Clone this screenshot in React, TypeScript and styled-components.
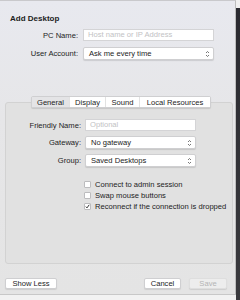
import React from "react";
import styled, { createGlobalStyle } from "styled-components";

const GlobalStyle = createGlobalStyle`
  html, body {
    margin: 0;
    padding: 0;
    background: #f4f4f4;
    width: 240px;
    height: 300px;
    overflow: hidden;
  }
  * { box-sizing: border-box; }
`;

const Screen = styled.div`
  display: flex;
  width: 240px;
  height: 300px;
  background: #f2f2f2;
`;

const Window = styled.div`
  width: 236px;
  height: 295px;
  display: flex;
  flex-direction: column;
  background: linear-gradient(#e8e9ef, #e6e6e8 40%, #e4e4e4);
  border-top: 1px solid #c9c9cc;
  border-right: 1px solid #bdbdbd;
  border-bottom: 1px solid #c8c8c8;
  font-family: "Liberation Sans", Arial, sans-serif;
  font-size: 7.6px;
  color: #1c1c1c;
`;

const SideShade = styled.div`
  flex: 1;
  background: linear-gradient(#f0f0f0 0, #f0f0f0 8px, #2a2a30 8px, #3a3a3e 100%);
`;

const Title = styled.div`
  font-weight: bold;
  font-size: 8px;
  padding: 13px 0 0 10px;
  height: 28px;
`;

const FormGrid = styled.div<{ $label: number; $field: number; $gap: number; $row: number }>`
  display: grid;
  grid-template-columns: ${(p) => p.$label}px ${(p) => p.$field}px;
  column-gap: ${(p) => p.$gap}px;
  row-gap: ${(p) => p.$row}px;
  align-items: center;
`;

const Label = styled.div`
  text-align: right;
  white-space: nowrap;
`;

const TextField = styled.div`
  height: 12px;
  background: #ffffff;
  border: 1px solid #d4d4d6;
  padding-left: 4px;
  color: #c2c2c4;
  line-height: 10px;
  white-space: nowrap;
`;

const Select = styled.div`
  height: 13px;
  background: #ffffff;
  border: 1px solid #cfcfd1;
  border-radius: 2px;
  box-shadow: 0 1px 1px rgba(0, 0, 0, 0.12);
  display: flex;
  align-items: center;
  justify-content: space-between;
  padding: 0 3px 0 5px;
  white-space: nowrap;
`;

const Chevrons = () => (
  <svg width="5" height="8" viewBox="0 0 5 8">
    <path d="M1 3 L2.5 1.5 L4 3 M1 5 L2.5 6.5 L4 5" stroke="#555" strokeWidth="0.8" fill="none" />
  </svg>
);

const TopForm = styled.div`
  padding-left: 6px;
`;

const TabArea = styled.div`
  position: relative;
  margin: 36px 2px 0 5px;
  flex: 0 0 168px;
  display: flex;
  flex-direction: column;
`;

const TabPanel = styled.div`
  flex: 1;
  margin-top: 6px;
  background: #e1e1e1;
  border: 1px solid #d2d2d2;
  border-radius: 3px;
  padding: 16px 0 0 5px;
`;

const TabBar = styled.div`
  position: absolute;
  top: 0;
  left: 26px;
  display: flex;
  height: 12px;
  background: #ffffff;
  border: 1px solid #cfcfd1;
  border-radius: 2px;
  box-shadow: 0 1px 1px rgba(0, 0, 0, 0.12);
`;

const Tab = styled.div<{ $active?: boolean; $w: number }>`
  width: ${(p) => p.$w}px;
  display: flex;
  align-items: center;
  justify-content: center;
  background: ${(p) => (p.$active ? "#e4e4e6" : "#ffffff")};
  border-right: 1px solid #e2e2e2;
  &:last-child { border-right: none; }
`;

const Checks = styled.div`
  display: flex;
  flex-direction: column;
  gap: 3px;
  margin: 13px 0 0 73px;
`;

const CheckRow = styled.div`
  display: flex;
  align-items: center;
  gap: 4px;
  white-space: nowrap;
  height: 8px;
`;

const Box = styled.div`
  width: 7px;
  height: 7px;
  background: #ffffff;
  border: 1px solid #bcbcbe;
  border-radius: 1px;
  display: flex;
  align-items: center;
  justify-content: center;
`;

const Footer = styled.div`
  display: flex;
  align-items: center;
  padding: 14px 8px 0 5px;
  gap: 8px;
`;

const Button = styled.div<{ $disabled?: boolean; $w: number }>`
  width: ${(p) => p.$w}px;
  height: 11px;
  background: ${(p) => (p.$disabled ? "#ededed" : "#ffffff")};
  border: 1px solid ${(p) => (p.$disabled ? "#dedede" : "#cfcfd1")};
  border-radius: 2px;
  box-shadow: 0 1px 1px rgba(0, 0, 0, 0.1);
  color: ${(p) => (p.$disabled ? "#b4b4b4" : "#1c1c1c")};
  display: flex;
  align-items: center;
  justify-content: center;
`;

const Spacer = styled.div`
  flex: 1;
`;

export default function App() {
  return (
    <Screen>
      <GlobalStyle />
      <Window>
        <Title>Add Desktop</Title>
        <TopForm>
          <FormGrid $label={72} $field={131} $gap={5} $row={6}>
            <Label>PC Name:</Label>
            <TextField>Host name or IP Address</TextField>
            <Label>User Account:</Label>
            <Select>
              <span>Ask me every time</span>
              <Chevrons />
            </Select>
          </FormGrid>
        </TopForm>
        <TabArea>
          <TabBar>
            <Tab $active $w={38}>General</Tab>
            <Tab $w={36}>Display</Tab>
            <Tab $w={34}>Sound</Tab>
            <Tab $w={70}>Local Resources</Tab>
          </TabBar>
          <TabPanel>
            <FormGrid $label={70} $field={111} $gap={4} $row={5}>
              <Label>Friendly Name:</Label>
              <TextField>Optional</TextField>
              <Label>Gateway:</Label>
              <Select>
                <span>No gateway</span>
                <Chevrons />
              </Select>
              <Label>Group:</Label>
              <Select>
                <span>Saved Desktops</span>
                <Chevrons />
              </Select>
            </FormGrid>
            <Checks>
              <CheckRow><Box />Connect to admin session</CheckRow>
              <CheckRow><Box />Swap mouse buttons</CheckRow>
              <CheckRow>
                <Box>
                  <svg width="5" height="5" viewBox="0 0 5 5">
                    <path d="M0.8 2.6 L2 3.9 L4.2 0.8" stroke="#222" strokeWidth="0.9" fill="none" />
                  </svg>
                </Box>
                Reconnect if the connection is dropped
              </CheckRow>
            </Checks>
          </TabPanel>
        </TabArea>
        <Footer>
          <Button $w={52}>Show Less</Button>
          <Spacer />
          <Button $w={37}>Cancel</Button>
          <Button $w={38} $disabled>Save</Button>
        </Footer>
      </Window>
      <SideShade />
    </Screen>
  );
}
